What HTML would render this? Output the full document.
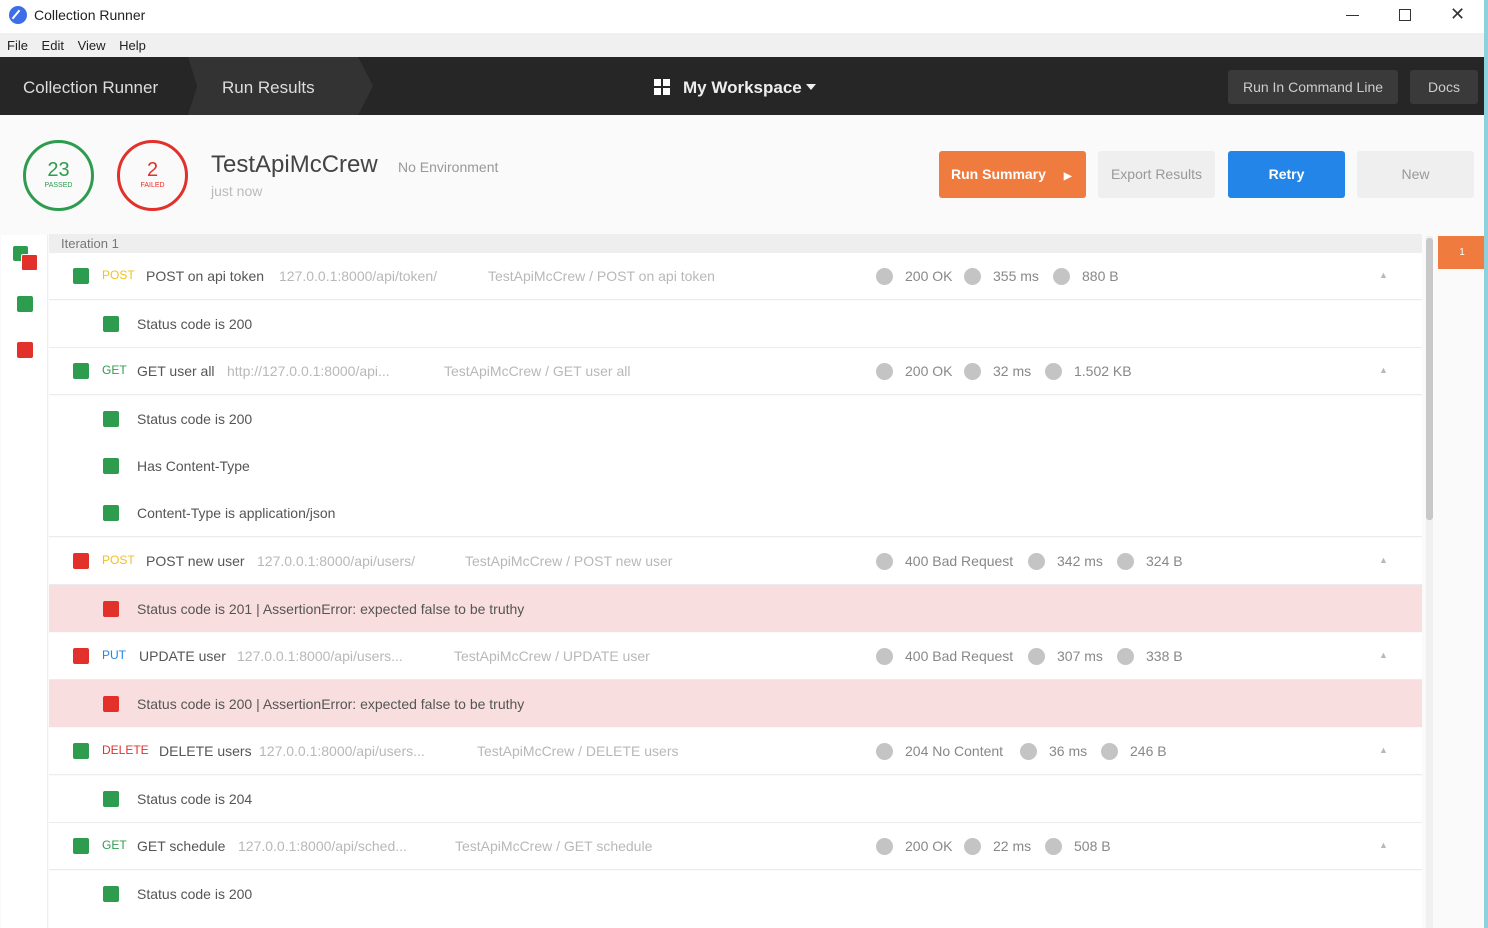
<!DOCTYPE html>
<html><head><meta charset="utf-8"><style>
*{margin:0;padding:0;box-sizing:border-box}
body{width:1488px;height:928px;overflow:hidden;background:#fafafa;font-family:"Liberation Sans",sans-serif;position:relative;color:#555}
.a{position:absolute;white-space:nowrap}
.sq{position:absolute;width:16px;height:16px;border-radius:2px}
.g{background:#2e9c4f}.r{background:#e2302a}
.dot{position:absolute;width:17px;height:17px;border-radius:50%;background:#c4c4c4}
.row{position:absolute;left:49px;width:1373px;height:47px;border-bottom:1px solid #ececec;background:#fff}
.t{font-size:14px;color:#555}
.l{font-size:14px;color:#b8b8b8}
</style></head><body>
<!-- title bar -->
<div class="a" style="left:0;top:0;width:1488px;height:33px;background:#fff"></div>
<div class="a" style="left:9px;top:6px;width:18px;height:18px;border-radius:50%;background:#3d6ee8"></div>
<div class="a" style="left:15px;top:9px;width:2px;height:11px;background:#fff;transform:rotate(40deg)"></div>
<div class="a" style="left:34px;top:7px;font-size:14px;color:#222">Collection Runner</div>
<div class="a" style="left:1346px;top:15px;width:13px;height:1px;background:#333"></div>
<div class="a" style="left:1399px;top:9px;width:12px;height:12px;border:1px solid #333"></div>
<div class="a" style="left:1450px;top:4px;font-size:18px;color:#333">✕</div>
<!-- menu -->
<div class="a" style="left:0;top:33px;width:1488px;height:24px;background:#f0f0f0"></div>
<div class="a" style="left:7px;top:38px;font-size:13px;color:#222;word-spacing:10px">File Edit View Help</div>
<!-- dark header -->
<div class="a" style="left:0;top:57px;width:1488px;height:58px;background:#262626"></div>
<div class="a" style="left:188px;top:57px;width:185px;height:58px;background:#333;clip-path:polygon(0 0,92% 0,100% 50%,92% 100%,0 100%,5% 50%)"></div>
<div class="a" style="left:23px;top:78px;font-size:17px;color:#ddd">Collection Runner</div>
<div class="a" style="left:222px;top:78px;font-size:17px;color:#ddd">Run Results</div>
<svg class="a" style="left:654px;top:79px" width="17" height="17"><rect x="0" y="0" width="7" height="7" fill="#fff"/><rect x="9" y="0" width="7" height="7" fill="#fff"/><rect x="0" y="9" width="7" height="7" fill="#fff"/><rect x="9" y="9" width="7" height="7" fill="#fff"/></svg>
<div class="a" style="left:683px;top:78px;font-size:17px;color:#eee;font-weight:bold">My Workspace</div>
<div class="a" style="left:806px;top:84px;border-left:5px solid transparent;border-right:5px solid transparent;border-top:6px solid #eee"></div>
<div class="a" style="left:1228px;top:70px;width:170px;height:34px;background:#3a3a3a;border-radius:3px;color:#ccc;font-size:14px;text-align:center;line-height:34px">Run In Command Line</div>
<div class="a" style="left:1410px;top:70px;width:68px;height:34px;background:#3a3a3a;border-radius:3px;color:#ccc;font-size:14px;text-align:center;line-height:34px">Docs</div>
<!-- summary -->
<div class="a" style="left:23px;top:140px;width:71px;height:71px;border:3px solid #2e9c4f;border-radius:50%;text-align:center;color:#2e9c4f"><div style="font-size:20px;margin-top:16px">23</div><div style="font-size:7px">PASSED</div></div>
<div class="a" style="left:117px;top:140px;width:71px;height:71px;border:3px solid #e2302a;border-radius:50%;text-align:center;color:#e2302a"><div style="font-size:20px;margin-top:16px">2</div><div style="font-size:7px">FAILED</div></div>
<div class="a" style="left:211px;top:151px;font-size:24px;color:#444">TestApiMcCrew</div>
<div class="a" style="left:398px;top:159px;font-size:14px;color:#999">No Environment</div>
<div class="a" style="left:211px;top:183px;font-size:14px;color:#bbb">just now</div>
<div class="a" style="left:939px;top:151px;width:147px;height:47px;background:#ef7b3e;border-radius:3px;color:#fff;font-size:14px;font-weight:bold;line-height:47px;padding-left:12px">Run Summary <span style="margin-left:14px;font-size:10px">▶</span></div>
<div class="a" style="left:1098px;top:151px;width:117px;height:47px;background:#efefef;border-radius:3px;color:#999;font-size:14px;text-align:center;line-height:47px">Export Results</div>
<div class="a" style="left:1228px;top:151px;width:117px;height:47px;background:#2385e8;border-radius:3px;color:#fff;font-size:14px;font-weight:bold;text-align:center;line-height:47px">Retry</div>
<div class="a" style="left:1357px;top:151px;width:117px;height:47px;background:#efefef;border-radius:3px;color:#999;font-size:14px;text-align:center;line-height:47px">New</div>
<!-- sidebar -->
<div class="a" style="left:1px;top:235px;width:47px;height:693px;background:#fff;border-right:1px solid #eee"></div>
<div class="sq g" style="left:13px;top:246px;width:15px;height:15px"></div>
<div class="sq r" style="left:21px;top:254px;width:17px;height:17px;border:1px solid #fff"></div>
<div class="sq g" style="left:17px;top:296px"></div>
<div class="sq r" style="left:17px;top:342px"></div>
<!-- iteration header -->
<div class="a" style="left:49px;top:234px;width:1373px;height:19px;background:#eee"></div>
<div class="a" style="left:61px;top:236px;font-size:13px;color:#777">Iteration 1</div>
<!-- scrollbar + badge -->
<div class="a" style="left:1426px;top:236px;width:7px;height:692px;background:#f0f0f0"></div>
<div class="a" style="left:1426px;top:238px;width:7px;height:282px;background:#c8c8c8;border-radius:3px"></div>
<div class="a" style="left:1438px;top:236px;width:48px;height:33px;background:#ef7b3e;color:#fff;font-size:10px;text-align:center;line-height:33px">1</div>
<div class="a" style="left:1484px;top:0;width:4px;height:928px;background:#8fd0dd"></div>

<!-- rows -->
<div class="row" style="top:253px"></div>
<div class="sq g" style="left:73px;top:268px"></div><div class="a t" style="left:102px;top:268px;font-size:12px;color:#f0c020">POST</div><div class="a t" style="left:146px;top:268px">POST on api token</div><div class="a l" style="left:279px;top:268px">127.0.0.1:8000/api/token/</div><div class="a l" style="left:488px;top:268px">TestApiMcCrew / POST on api token</div>
<div class="dot" style="left:876px;top:268px"></div><div class="a l" style="left:905px;top:268px;color:#888">200 OK</div><div class="dot" style="left:964px;top:268px"></div><div class="a l" style="left:993px;top:268px;color:#888">355 ms</div><div class="dot" style="left:1053px;top:268px"></div><div class="a l" style="left:1082px;top:268px;color:#888">880 B</div><div class="a l" style="left:1379px;top:270px;font-size:9px">▲</div>

<div class="row" style="top:301px"></div>
<div class="sq g" style="left:103px;top:316px"></div><div class="a t" style="left:137px;top:316px">Status code is 200</div>

<div class="row" style="top:348px"></div>
<div class="sq g" style="left:73px;top:363px"></div><div class="a t" style="left:102px;top:363px;font-size:12px;color:#2e9c4f">GET</div><div class="a t" style="left:137px;top:363px">GET user all</div><div class="a l" style="left:227px;top:363px">http://127.0.0.1:8000/api...</div><div class="a l" style="left:444px;top:363px">TestApiMcCrew / GET user all</div>
<div class="dot" style="left:876px;top:363px"></div><div class="a l" style="left:905px;top:363px;color:#888">200 OK</div><div class="dot" style="left:964px;top:363px"></div><div class="a l" style="left:993px;top:363px;color:#888">32 ms</div><div class="dot" style="left:1045px;top:363px"></div><div class="a l" style="left:1074px;top:363px;color:#888">1.502 KB</div><div class="a l" style="left:1379px;top:365px;font-size:9px">▲</div>

<div class="row" style="top:396px;border:none"></div>
<div class="sq g" style="left:103px;top:411px"></div><div class="a t" style="left:137px;top:411px">Status code is 200</div>
<div class="row" style="top:443px;border:none"></div>
<div class="sq g" style="left:103px;top:458px"></div><div class="a t" style="left:137px;top:458px">Has Content-Type</div>
<div class="row" style="top:490px"></div>
<div class="sq g" style="left:103px;top:505px"></div><div class="a t" style="left:137px;top:505px">Content-Type is application/json</div>

<div class="row" style="top:538px"></div>
<div class="sq r" style="left:73px;top:553px"></div><div class="a t" style="left:102px;top:553px;font-size:12px;color:#f0c020">POST</div><div class="a t" style="left:146px;top:553px">POST new user</div><div class="a l" style="left:257px;top:553px">127.0.0.1:8000/api/users/</div><div class="a l" style="left:465px;top:553px">TestApiMcCrew / POST new user</div>
<div class="dot" style="left:876px;top:553px"></div><div class="a l" style="left:905px;top:553px;color:#888">400 Bad Request</div><div class="dot" style="left:1028px;top:553px"></div><div class="a l" style="left:1057px;top:553px;color:#888">342 ms</div><div class="dot" style="left:1117px;top:553px"></div><div class="a l" style="left:1146px;top:553px;color:#888">324 B</div><div class="a l" style="left:1379px;top:555px;font-size:9px">▲</div>

<div class="row" style="top:585px;background:#f8dede;border:none"></div>
<div class="sq r" style="left:103px;top:601px"></div><div class="a t" style="left:137px;top:601px">Status code is 201 | AssertionError: expected false to be truthy</div>

<div class="row" style="top:633px"></div>
<div class="sq r" style="left:73px;top:648px"></div><div class="a t" style="left:102px;top:648px;font-size:12px;color:#2385e8">PUT</div><div class="a t" style="left:139px;top:648px">UPDATE user</div><div class="a l" style="left:237px;top:648px">127.0.0.1:8000/api/users...</div><div class="a l" style="left:454px;top:648px">TestApiMcCrew / UPDATE user</div>
<div class="dot" style="left:876px;top:648px"></div><div class="a l" style="left:905px;top:648px;color:#888">400 Bad Request</div><div class="dot" style="left:1028px;top:648px"></div><div class="a l" style="left:1057px;top:648px;color:#888">307 ms</div><div class="dot" style="left:1117px;top:648px"></div><div class="a l" style="left:1146px;top:648px;color:#888">338 B</div><div class="a l" style="left:1379px;top:650px;font-size:9px">▲</div>

<div class="row" style="top:680px;background:#f8dede;border:none"></div>
<div class="sq r" style="left:103px;top:696px"></div><div class="a t" style="left:137px;top:696px">Status code is 200 | AssertionError: expected false to be truthy</div>

<div class="row" style="top:728px"></div>
<div class="sq g" style="left:73px;top:743px"></div><div class="a t" style="left:102px;top:743px;font-size:12px;color:#e2302a">DELETE</div><div class="a t" style="left:159px;top:743px">DELETE users</div><div class="a l" style="left:259px;top:743px">127.0.0.1:8000/api/users...</div><div class="a l" style="left:477px;top:743px">TestApiMcCrew / DELETE users</div>
<div class="dot" style="left:876px;top:743px"></div><div class="a l" style="left:905px;top:743px;color:#888">204 No Content</div><div class="dot" style="left:1020px;top:743px"></div><div class="a l" style="left:1049px;top:743px;color:#888">36 ms</div><div class="dot" style="left:1101px;top:743px"></div><div class="a l" style="left:1130px;top:743px;color:#888">246 B</div><div class="a l" style="left:1379px;top:745px;font-size:9px">▲</div>

<div class="row" style="top:776px"></div>
<div class="sq g" style="left:103px;top:791px"></div><div class="a t" style="left:137px;top:791px">Status code is 204</div>

<div class="row" style="top:823px"></div>
<div class="sq g" style="left:73px;top:838px"></div><div class="a t" style="left:102px;top:838px;font-size:12px;color:#2e9c4f">GET</div><div class="a t" style="left:137px;top:838px">GET schedule</div><div class="a l" style="left:238px;top:838px">127.0.0.1:8000/api/sched...</div><div class="a l" style="left:455px;top:838px">TestApiMcCrew / GET schedule</div>
<div class="dot" style="left:876px;top:838px"></div><div class="a l" style="left:905px;top:838px;color:#888">200 OK</div><div class="dot" style="left:964px;top:838px"></div><div class="a l" style="left:993px;top:838px;color:#888">22 ms</div><div class="dot" style="left:1045px;top:838px"></div><div class="a l" style="left:1074px;top:838px;color:#888">508 B</div><div class="a l" style="left:1379px;top:840px;font-size:9px">▲</div>

<div class="row" style="top:871px;height:57px;border:none"></div>
<div class="sq g" style="left:103px;top:886px"></div><div class="a t" style="left:137px;top:886px">Status code is 200</div>
</body></html>
